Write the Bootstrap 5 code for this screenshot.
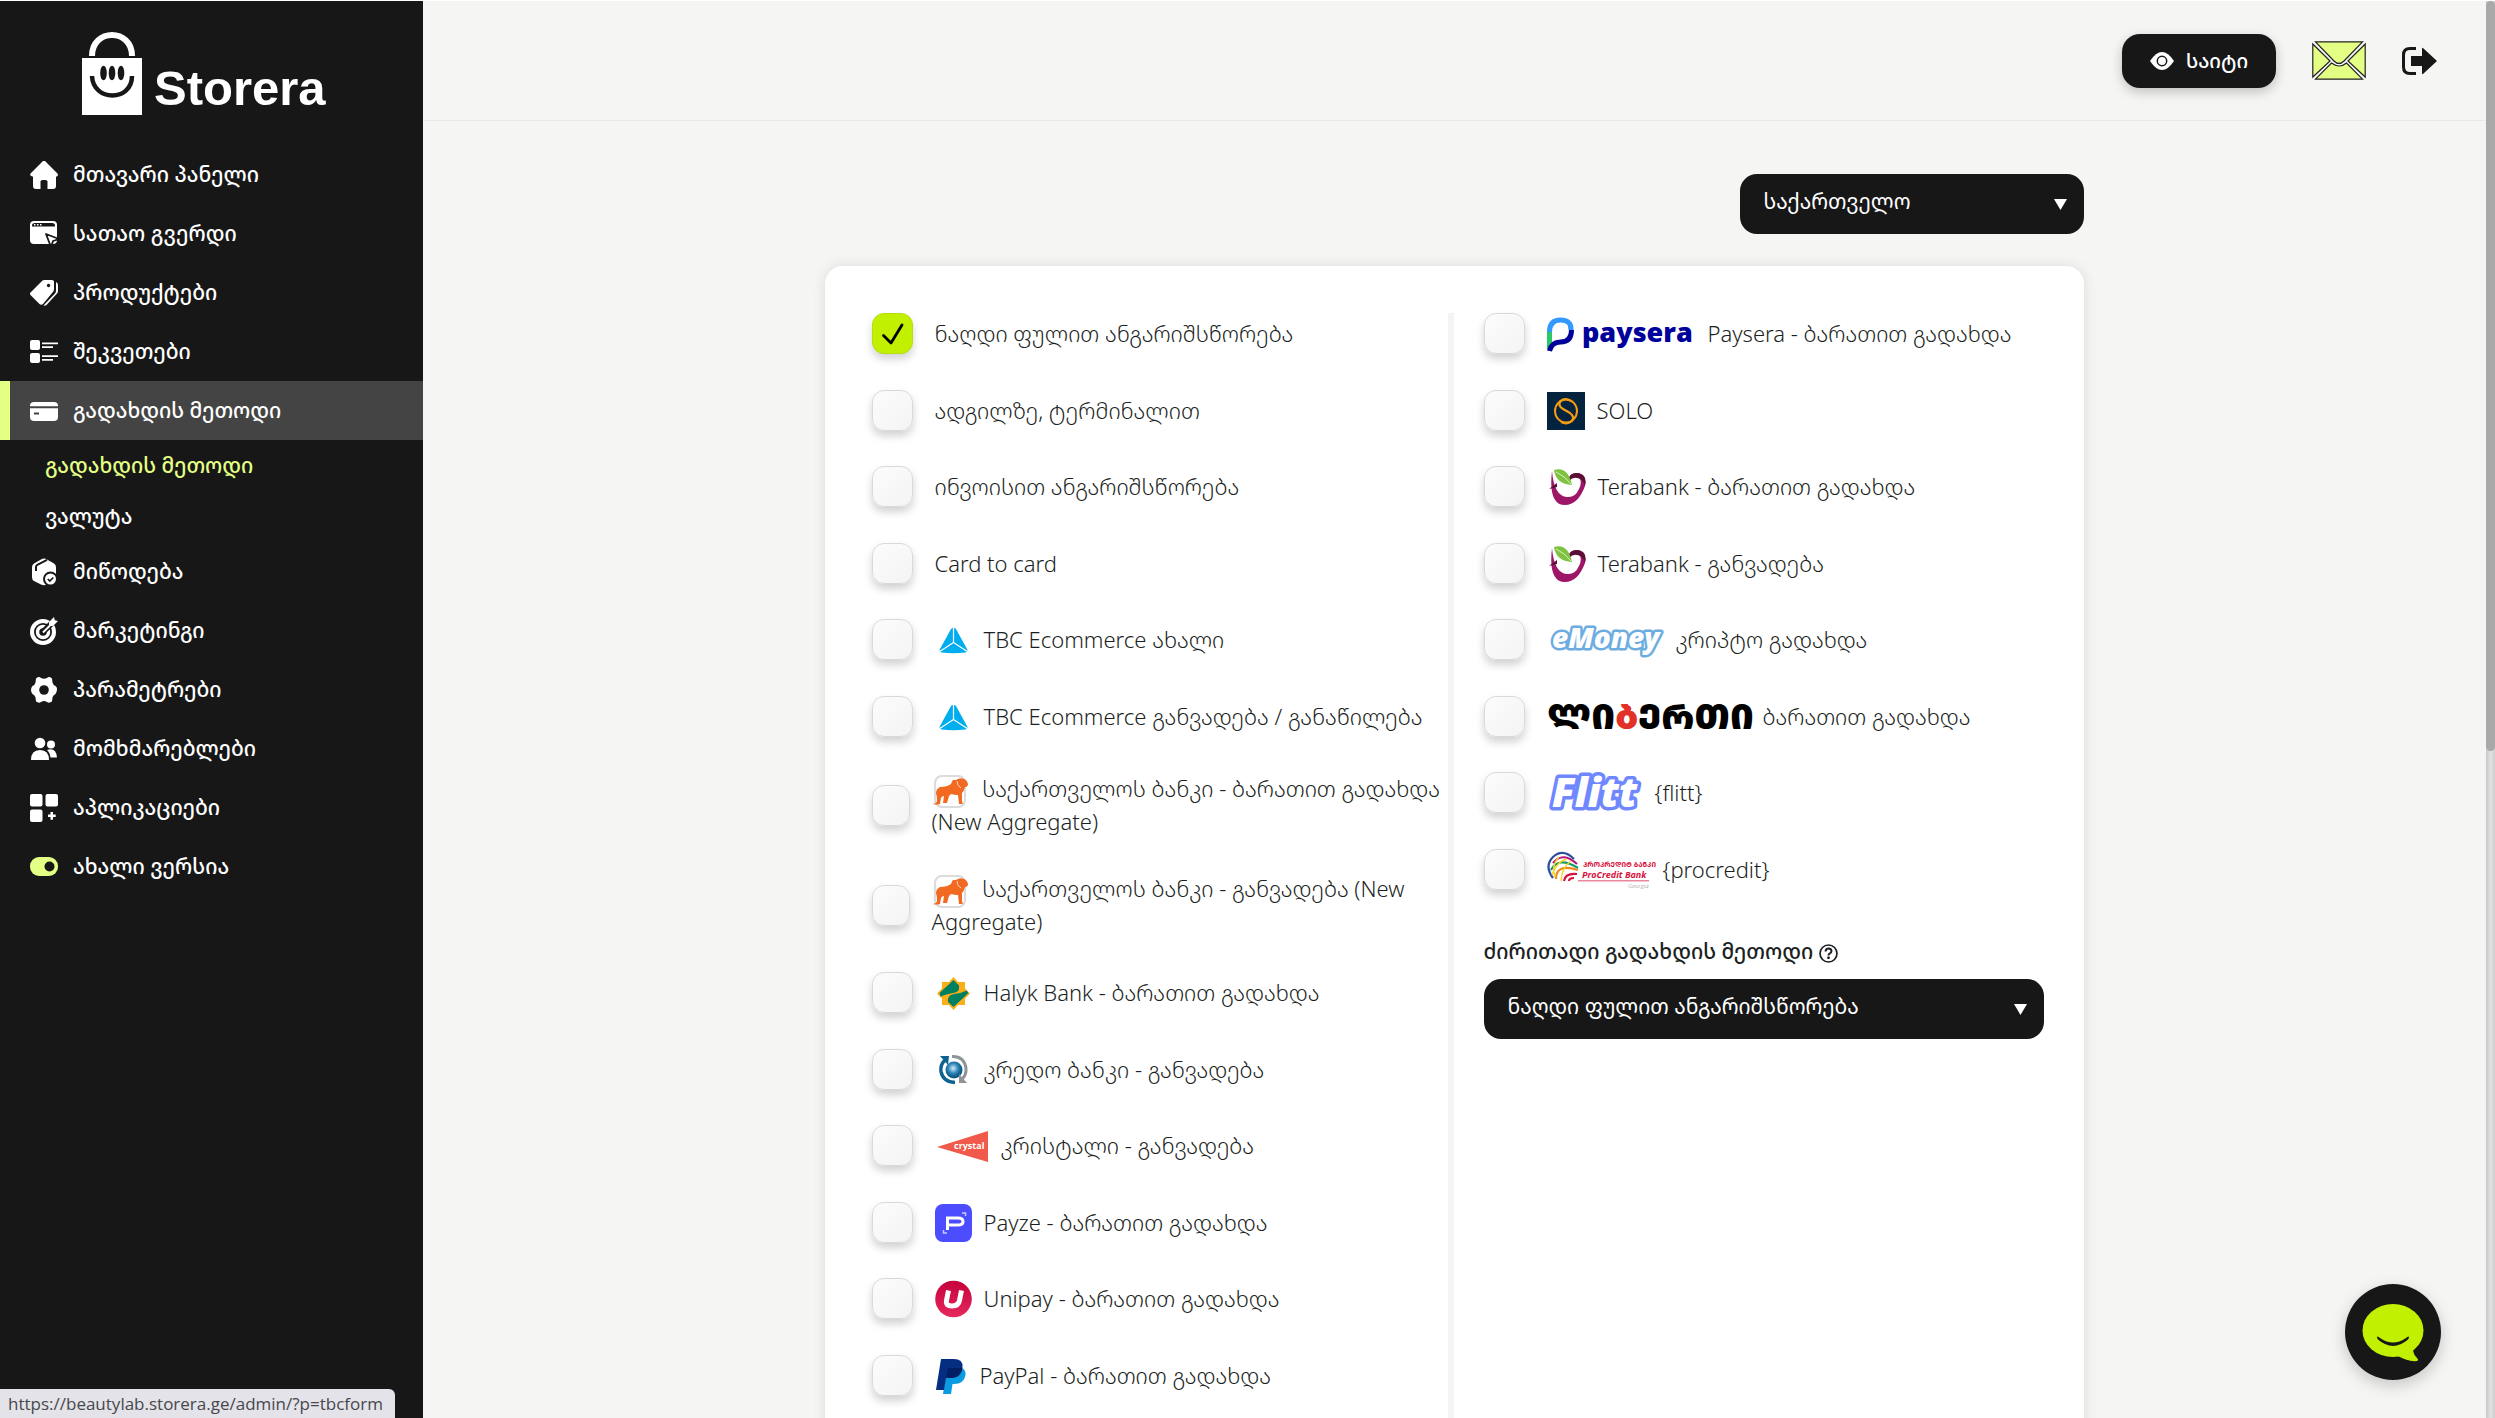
<!DOCTYPE html>
<html lang="ka">
<head>
<meta charset="utf-8">
<meta name="viewport" content="width=device-width, initial-scale=1">
<title>Storera</title>
<link href="https://cdn.jsdelivr.net/npm/bootstrap@5.3.0/dist/css/bootstrap.min.css" rel="stylesheet">
<script src="https://cdn.jsdelivr.net/npm/bootstrap@5.3.0/dist/js/bootstrap.bundle.min.js"></script>
<style>
:root{--ink:#171717;--lime:#e3ff84;--acid:#c1f100;--page:#f5f5f3}
body{font-family:"Noto Sans Georgian","Open Sans",sans-serif;font-size:22px;font-weight:300;color:#1c1f23;background:#fff;overflow:hidden}
.shell{padding-top:1px}
.side{width:423px;background:var(--ink)}
.brand-logo{padding:24px 0 0 78px;height:144px}
.side-link{height:59px;padding-left:30px;gap:15px;color:#fff;font-weight:500;font-size:21px;text-decoration:none}
.side-link svg{width:28px;height:28px;flex:none}
.side-link:hover{color:#fff}
.side-link.active{background:#444;border-left:10px solid var(--lime);padding-left:20px}
.side-sub{height:51px;padding-left:45px;color:#fff;font-weight:500;font-size:21px;text-decoration:none}
.side-sub.active{color:var(--lime)}
.main-area{background:var(--page);min-width:0}
.topbar{height:120px;border-bottom:1px solid #e9e9e8;padding-right:48px;gap:36px}
.site-btn{width:154px;height:54px;border:0;border-radius:18px;background:var(--ink);color:#fff;font-size:20px;font-weight:500;gap:12px;box-shadow:0 4px 12px rgba(0,0,0,.22)}
.plain-btn{border:0;background:none;padding:0;line-height:1}
.content-wrap{width:100%;max-width:1260px;padding:53px 1px 0 0}
.dark-select{height:60px;border:0;border-radius:17px;background-color:var(--ink);color:#fff;font-size:21px;font-weight:400;padding:0 44px 4px 24px;appearance:none;background-repeat:no-repeat;background-position:right 17px center;background-image:url("data:image/svg+xml,%3Csvg xmlns='http://www.w3.org/2000/svg' width='13' height='11'%3E%3Cpath d='M0 0h13L6.500 11z' fill='white'/%3E%3C/svg%3E")}
.country{width:344px}
.panel{background:#fff;border-radius:18px;box-shadow:0 0 14px rgba(0,0,0,.1);padding:47px 40px 0 47px}
.col-a{flex:0 0 582px;border-right:6px solid #f4f4f3}
.col-b{padding-left:30px}
.pay-item{min-height:41px;margin-bottom:36px}
.pay-item:nth-child(even){margin-bottom:35px}
.pay-item.pay-double{margin-bottom:34px}
.pay-check{appearance:none;flex:none;width:41px;height:41px;margin:0 22px 0 0;border:1px solid #d9d9d9;border-radius:12px;background:linear-gradient(135deg,#fcfcfc,#f4f4f4);box-shadow:0 5px 9px rgba(0,0,0,.18)}
.pay-check:checked{background:var(--acid) url("data:image/svg+xml,%3Csvg xmlns='http://www.w3.org/2000/svg' viewBox='0 0 39 39'%3E%3Cpath d='M10.500 21.500l7.500 7.500L29 11' fill='none' stroke='black' stroke-width='2.800' stroke-linecap='round' stroke-linejoin='round'/%3E%3C/svg%3E") center/100% 100%;border-color:#b4de0c}
.pay-label{line-height:38px;display:flex;align-items:center;gap:12px}
.pay-label svg{flex:none;overflow:visible}
.pay-double .pay-check{width:38px}
.pay-double .pay-label{display:block;line-height:33px}
.pay-double svg{margin:-6px 8px -6px 0;vertical-align:middle}
.default-label{font-size:21px;font-weight:500;line-height:30px;padding-top:11px;margin-bottom:13px}
.bar-rail{width:9px;background:linear-gradient(90deg,#c9c9c9,#e0e0e0 50%,#cfcfcf)}
.bar-thumb{height:750px;background:#a9a9a9;border-radius:5px}
.chat-btn{position:fixed;right:54px;bottom:38px;width:96px;height:96px;border:0;border-radius:50%;background:var(--ink);box-shadow:0 5px 16px rgba(0,0,0,.2);padding:0}
.url-tip{position:fixed;left:0;bottom:0;background:#e3e3e9;color:#47484d;font:400 17px/29px "Open Sans",sans-serif;padding:0 12px 0 8px;border-top-right-radius:6px}
</style>
</head>
<body>
<div class="shell d-flex vh-100">
<aside class="side flex-shrink-0">
  <div class="brand-logo">
    <svg width="260" height="96" viewBox="78 25 260 96" role="img" aria-label="Storera"><path d="M92 56c0-28 40-28 40 0" fill="none" stroke="#fff" stroke-width="6"/><path d="M82 58h60v57H82z" fill="#fff"/><g fill="#171717"><ellipse cx="103.500" cy="73" rx="3.300" ry="7.300"/><ellipse cx="112" cy="73" rx="3.300" ry="7.300"/><ellipse cx="121" cy="73" rx="3.300" ry="7.300"/></g><path d="M92 76c1 26 40 26 40 0" fill="none" stroke="#171717" stroke-width="4.500"/><text x="154" y="105" font-family="Liberation Sans,sans-serif" font-weight="700" font-size="49" fill="#fff">Storera</text></svg>
  </div>
  <nav>
    <a class="side-link d-flex align-items-center" href="#"><svg viewBox="0 0 28 28" fill="#fff"><path d="M14 0c1 0 1.500.4 2 .9L27 12c2 2 .5 3.500-1 3.700V25c0 2-1 3-3 3h-5.500v-8c0-1.500-7-1.500-7 0v8H6c-2 0-3-1-3-3v-9.300C1 15.500-1 14 1 12L12 .9c.5-.5 1-.9 2-.9z"/></svg>მთავარი პანელი</a>
    <a class="side-link d-flex align-items-center" href="#"><svg viewBox="0 0 28 28"><rect x="0" y="1" width="27" height="23" rx="4" fill="#fff"/><path d="M2 6.500V5.500Q2 3 5 3h17q3 0 3 2.500v1z" fill="#171717"/><path d="M4 4.800h1.500M7 4.800h1.500M10 4.800h1.500" stroke="#fff" stroke-width="1.400"/><path d="M16 14l13 5-6 2-2 6z" fill="#fff" stroke="#171717" stroke-width="1.800" stroke-linejoin="round"/></svg>სათაო გვერდი</a>
    <a class="side-link d-flex align-items-center" href="#"><svg viewBox="0 0 28 28" fill="#fff"><path fill-rule="evenodd" d="M12 2q1-1 2.500-1H22q2 0 2 2v7q0 2-1.500 3.500L13 25q-2 1.500-3.500 0L1 16.500q-2-2 0-3.500zM18.500 4.800a1.700 1.700 0 1 0 .1 0z"/><path d="M26 3q2 1 2 3v6q0 1.500-1 2.500L16.500 26q-1.500 1-3 .5L25 14.500q1-1.200 1-3z"/></svg>პროდუქტები</a>
    <a class="side-link d-flex align-items-center" href="#"><svg viewBox="0 0 28 28" fill="#fff"><rect x="0" y="2" width="10" height="10" rx="2"/><rect x="0" y="15" width="10" height="10" rx="2"/><path d="M12 4.500h16v1.800H12zM12 8.300h11v1.700H12zM12 17.200h16V19H12zM12 21h11v1.700H12z"/></svg>შეკვეთები</a>
    <a class="side-link active d-flex align-items-center" href="#" aria-current="page"><svg viewBox="0 0 28 28"><rect y="5" width="28" height="19" rx="4" fill="#fff"/><path d="M0 10.300h28M4 16.500h5" stroke="#444" stroke-width="2"/></svg>გადახდის მეთოდი</a>
    <a class="side-sub active d-flex align-items-center" href="#">გადახდის მეთოდი</a>
    <a class="side-sub d-flex align-items-center" href="#">ვალუტა</a>
    <a class="side-link d-flex align-items-center" href="#"><svg viewBox="0 0 28 28"><path d="M11 1.500q3-1.800 6 0l7 4q2 1 2 4V19q0 3-2 4l-7 3.500q-3 1.500-6 0l-7-3.500q-2-1-2-4V9.500q0-3 2-4z" fill="#fff"/><path d="M6 13V9q0-1.500 1.300-2.200L17 1.800" fill="none" stroke="#171717" stroke-width="2"/><circle cx="20.500" cy="21" r="6.500" fill="#fff" stroke="#171717" stroke-width="2"/><path d="M17.800 21l2 2 3.500-3.500" fill="none" stroke="#171717" stroke-width="1.700"/></svg>მიწოდება</a>
    <a class="side-link d-flex align-items-center" href="#"><svg viewBox="0 0 28 28"><circle cx="13" cy="15" r="11" fill="none" stroke="#fff" stroke-width="4"/><circle cx="13" cy="15" r="5.500" fill="none" stroke="#fff" stroke-width="3.500"/><path d="M12 16L23 5" stroke="#171717" stroke-width="6"/><path d="M13 15.500L22 6.500" stroke="#fff" stroke-width="2"/><path d="M19 5l5-5 .8 3.200L28 4l-5 5h-4z" fill="#fff"/></svg>მარკეტინგი</a>
    <a class="side-link d-flex align-items-center" href="#"><svg viewBox="0 0 28 28"><path d="M6 2.500Q9 0 11 2q3 1.500 6 0 2-2 5 .5l.5 4q.5 2.500 3 3.500 2 1.500 1.500 4t-1.500 4q-2.500 1-3 3.500l-.5 4q-3 2-5 .5-3-2-6 0-2 1.500-5-.5l-.5-4Q5 19 2.500 18 1 16.500 1 14t1.500-4q2.500-1 3-3.500z" fill="#fff"/><circle cx="14" cy="14" r="4.800" fill="#171717"/></svg>პარამეტრები</a>
    <a class="side-link d-flex align-items-center" href="#"><svg viewBox="0 0 28 28" fill="#fff"><circle cx="10" cy="8" r="5.300"/><circle cx="21" cy="9.500" r="4"/><path d="M1 25q0-10 9-10t9 10zM20.500 22.500q-.5-5-3.500-7.500 9-3 10 7.500z"/></svg>მომხმარებლები</a>
    <a class="side-link d-flex align-items-center" href="#"><svg viewBox="0 0 28 28" fill="#fff"><rect width="12.500" height="12.500" rx="2"/><rect x="15.500" width="12.500" height="12.500" rx="2"/><rect y="15.500" width="12.500" height="12.500" rx="2"/><path d="M20.500 18h2.500v2.500h2.700v2.500H23v2.700h-2.500V23H18v-2.500h2.500z"/></svg>აპლიკაციები</a>
    <a class="side-link d-flex align-items-center" href="#"><svg viewBox="0 0 28 28"><rect y="4" width="28" height="19" rx="9" fill="#e3ff84"/><circle cx="19.500" cy="13.500" r="5" fill="#171717"/></svg>ახალი ვერსია</a>
  </nav>
</aside>

<main class="main-area flex-grow-1 overflow-hidden">
  <header class="topbar d-flex align-items-center justify-content-end">
    <button class="site-btn d-flex align-items-center justify-content-center" type="button"><svg width="24" height="18" viewBox="0 0 24 18"><path d="M0 9Q12-9 24 9 12 27 0 9z" fill="#fff"/><circle cx="12" cy="9" r="4.700" fill="none" stroke="#171717" stroke-width="1.500"/></svg>საიტი</button>
    <button class="plain-btn" type="button" aria-label="messages"><svg width="54" height="39" viewBox="0 0 54 39" fill="#e3ff84" stroke="#222" stroke-width="1.200"><path d="M3.500.8h47L32 20q-5 5-10 0zM.8 3v33L18 20zM53.200 3v33L36 20zM3.500 38.200L19.500 22q8 6 15 0l16 16.200z"/></svg></button>
    <button class="plain-btn" type="button" aria-label="logout"><svg width="36" height="28" viewBox="0 0 36 28"><path d="M14 1.500H8Q1.500 1.500 1.500 8v12q0 6.500 6.500 6.500h6" fill="none" stroke="#171717" stroke-width="3"/><path d="M9 9h11V2q0-2 1.500-.5L35 14 21.500 26.500Q20 28 20 26v-7H9z" fill="#171717"/></svg></button>
  </header>

  <div class="content-wrap mx-auto">
    <div class="d-flex justify-content-end mb-4 pb-2">
      <select class="dark-select country" aria-label="ქვეყანა"><option>საქართველო</option></select>
    </div>
    <section class="panel d-flex vh-100">
      <ul class="col-a list-unstyled mb-0">
        <li class="pay-item d-flex align-items-center"><input class="pay-check" type="checkbox" id="p1" checked><label class="pay-label" for="p1">ნაღდი ფულით ანგარიშსწორება</label></li>
        <li class="pay-item d-flex align-items-center"><input class="pay-check" type="checkbox" id="p2"><label class="pay-label" for="p2">ადგილზე, ტერმინალით</label></li>
        <li class="pay-item d-flex align-items-center"><input class="pay-check" type="checkbox" id="p3"><label class="pay-label" for="p3">ინვოისით ანგარიშსწორება</label></li>
        <li class="pay-item d-flex align-items-center"><input class="pay-check" type="checkbox" id="p4"><label class="pay-label" for="p4">Card to card</label></li>
        <li class="pay-item d-flex align-items-center"><input class="pay-check" type="checkbox" id="p5"><label class="pay-label" for="p5"><svg width="37" height="38"><use href="#tbc"/></svg>TBC Ecommerce ახალი</label></li>
        <li class="pay-item d-flex align-items-center"><input class="pay-check" type="checkbox" id="p6"><label class="pay-label" for="p6"><svg width="37" height="38"><use href="#tbc"/></svg>TBC Ecommerce განვადება / განაწილება</label></li>
        <li class="pay-item pay-double d-flex align-items-center"><input class="pay-check" type="checkbox" id="p7"><label class="pay-label" for="p7"><svg width="37" height="33"><use href="#bog"/></svg> საქართველოს ბანკი - ბარათით გადახდა (New Aggregate)</label></li>
        <li class="pay-item pay-double d-flex align-items-center"><input class="pay-check" type="checkbox" id="p8"><label class="pay-label" for="p8"><svg width="37" height="33"><use href="#bog"/></svg> საქართველოს ბანკი - განვადება (New Aggregate)</label></li>
        <li class="pay-item d-flex align-items-center"><input class="pay-check" type="checkbox" id="p9"><label class="pay-label" for="p9"><svg width="37" height="38" viewBox="0 0 37 38"><path d="M18.500 3l4.500 5h7v6.500l5 5-5 5V31h-7l-4.500 5-4.500-5H7v-6.500l-5-5 5-5V8h7z" fill="#fbae17"/><path d="M18.500 6l5.500 5.500q1 7-6 7.500-7 1-12.500 3.500L4.500 19zM18.500 33L13 28q-1-7 6-8 7-.5 12.500-3.500l2 2.500z" fill="#00805f"/></svg>Halyk Bank - ბარათით გადახდა</label></li>
        <li class="pay-item d-flex align-items-center"><input class="pay-check" type="checkbox" id="p10"><label class="pay-label" for="p10"><svg width="37" height="38" viewBox="0 0 37 38"><defs><radialGradient id="globe" cx=".45" cy=".4"><stop offset="0" stop-color="#d5ecf8"/><stop offset=".6" stop-color="#2d84b5"/><stop offset="1" stop-color="#0a5b8b"/></radialGradient></defs><circle cx="19" cy="19" r="8.500" fill="url(#globe)"/><path d="M10 9q-5 5-4 11.500Q8 31 20 31.500" fill="none" stroke="#0e6292" stroke-width="3.500"/><path d="M5 5h9l-1 9z" fill="#0e6292"/><path d="M17 5.500Q29 5 31 17q.5 7-4 11" fill="none" stroke="#8e9497" stroke-width="3"/><path d="M24 23v9h8z" fill="#8e9497"/></svg>კრედო ბანკი - განვადება</label></li>
        <li class="pay-item d-flex align-items-center"><input class="pay-check" type="checkbox" id="p11"><label class="pay-label" for="p11"><svg width="54" height="38" viewBox="0 0 54 38"><path d="M2 20L53 4v31z" fill="#f15a4a"/><text x="19" y="22" font-family="Open Sans,sans-serif" font-weight="700" font-size="9" fill="#fff">crystal</text></svg>კრისტალი - განვადება</label></li>
        <li class="pay-item d-flex align-items-center"><input class="pay-check" type="checkbox" id="p12"><label class="pay-label" for="p12"><svg width="37" height="38" viewBox="0 0 37 38"><rect width="37" height="38" rx="8" fill="#4b4dff"/><path d="M12.500 26V14H23q5 0 5 3.500T23 21H12.500" fill="none" stroke="#fff" stroke-width="3"/><path d="M27 9h3.500v3M12 29H8.500v-3" fill="none" stroke="#c9caff" stroke-width="1.500"/></svg>Payze - ბარათით გადახდა</label></li>
        <li class="pay-item d-flex align-items-center"><input class="pay-check" type="checkbox" id="p13"><label class="pay-label" for="p13"><svg width="37" height="38" viewBox="0 0 37 38"><defs><linearGradient id="uni" x2="0" y2="1"><stop stop-color="#c5003a"/><stop offset="1" stop-color="#e6295f"/></linearGradient></defs><circle cx="18.500" cy="19" r="18.300" fill="url(#uni)"/><path d="M13.500 10.500l-2 10Q10.500 26 17 26t7.500-5.500l2-10" fill="none" stroke="#fff" stroke-width="5"/></svg>Unipay - ბარათით გადახდა</label></li>
        <li class="pay-item d-flex align-items-center"><input class="pay-check" type="checkbox" id="p14"><label class="pay-label" for="p14"><svg width="33" height="38" viewBox="0 0 33 38"><path d="M12 11h15q4 2 3.500 7Q29 27 19 27h-1.500L16 37H8z" fill="#0a9be0"/><path d="M6 2h13q9 0 8.500 8Q26.500 21 15 21h-4L9 33H1z" fill="#052e82"/><path d="M13 11h14.300Q26.300 21 15 21h-4z" fill="#021f66"/></svg>PayPal - ბარათით გადახდა</label></li>
      </ul>
      <div class="col-b flex-grow-1">
        <ul class="list-unstyled mb-0">
          <li class="pay-item d-flex align-items-center"><input class="pay-check" type="checkbox" id="q1"><label class="pay-label" for="q1"><svg width="149" height="38" viewBox="0 0 149 38"><path d="M2.500 17q0-12 11-12T24 15" fill="none" stroke="#3199ff" stroke-width="5"/><path d="M2.500 17v17" stroke="#2cc868" stroke-width="5"/><path d="M24.500 15q0 12-11 12-9 0-11 9" fill="none" stroke="#00009b" stroke-width="5"/><text x="35" y="27" font-family="Open Sans,sans-serif" font-weight="800" font-size="27" fill="#00009b">paysera</text></svg>Paysera - ბარათით გადახდა</label></li>
          <li class="pay-item d-flex align-items-center"><input class="pay-check" type="checkbox" id="q2"><label class="pay-label" for="q2"><svg width="38" height="38" viewBox="0 0 38 38"><path d="M0 0h38v38H0z" fill="#04233f"/><g fill="none" stroke="#f59c13"><ellipse cx="19" cy="19" rx="11" ry="11.500" stroke-width="2"/><path d="M24 9q-7-4-11 1-2 4 3 7l7 4q5 4 2 8-5 4-11 1" stroke-width="2.200"/></g></svg>SOLO</label></li>
          <li class="pay-item d-flex align-items-center"><input class="pay-check" type="checkbox" id="q3"><label class="pay-label" for="q3"><svg width="39" height="38"><use href="#tera"/></svg>Terabank - ბარათით გადახდა</label></li>
          <li class="pay-item d-flex align-items-center"><input class="pay-check" type="checkbox" id="q4"><label class="pay-label" for="q4"><svg width="39" height="38"><use href="#tera"/></svg>Terabank - განვადება</label></li>
          <li class="pay-item d-flex align-items-center"><input class="pay-check" type="checkbox" id="q5"><label class="pay-label" for="q5"><svg width="117" height="38" viewBox="0 0 117 38"><text x="5" y="27" font-family="Open Sans,sans-serif" font-style="italic" font-weight="800" font-size="28" fill="#fff" stroke="#6cacdf" stroke-width="5" stroke-linejoin="round" paint-order="stroke">eMoney</text></svg>კრიპტო გადახდა</label></li>
          <li class="pay-item d-flex align-items-center"><input class="pay-check" type="checkbox" id="q6"><label class="pay-label" for="q6"><svg width="204" height="38" viewBox="0 0 204 38"><text x="0" y="31" font-family="Noto Sans Georgian,DejaVu Sans,sans-serif" font-weight="900" font-size="36" fill="#000">ᲚᲘ<tspan fill="#e23127">Ბ</tspan>ᲔᲠᲗᲘ</text></svg>ბარათით გადახდა</label></li>
          <li class="pay-item d-flex align-items-center"><input class="pay-check" type="checkbox" id="q7"><label class="pay-label" for="q7"><svg width="96" height="38" viewBox="0 0 96 38"><text x="5" y="33" font-family="Open Sans,sans-serif" font-style="italic" font-weight="800" font-size="40" fill="#fff" stroke="#6f87ff" stroke-width="7" stroke-linejoin="round" paint-order="stroke">Flitt</text></svg>{flitt}</label></li>
          <li class="pay-item d-flex align-items-center"><input class="pay-check" type="checkbox" id="q8"><label class="pay-label" for="q8"><svg width="104" height="38" viewBox="0 0 104 38"><g fill="none" stroke-width="2.200"><path d="M6 27Q-3 15 6 6q10-9 21 2" stroke="#2d4f9e"/><path d="M6 12Q16 0 30 13" stroke="#b5127c"/><path d="M4 19Q11 5 31 17" stroke="#139a6b"/><path d="M9 28Q9 12 31 19" stroke="#f08a1d"/><path d="M5 24Q10 10 20 8M14 30q1-14 10-20M12 6Q4 14 8 26" stroke="#f5d327" stroke-width="1.500"/><path d="M17 30q1-8 13-7M22 30q0-3 5-3" stroke="#d8113c"/></g><g fill="#d8113c"><text x="36" y="16" font-family="Noto Sans Georgian,sans-serif" font-weight="700" font-size="7">ᲞᲠᲝᲙᲠᲔᲓᲘᲢ ᲑᲐᲜᲙᲘ</text><text x="35" y="27" font-family="Open Sans,sans-serif" font-weight="700" font-style="italic" font-size="9">ProCredit Bank</text><path d="M31 29.500h71v.8H31z"/></g><text x="81" y="37" font-family="Open Sans,sans-serif" font-style="italic" font-size="6" fill="#777">Georgia</text></svg>{procredit}</label></li>
        </ul>
        <label class="default-label d-block" for="defpay">ძირითადი გადახდის მეთოდი <svg width="19" height="19" viewBox="0 0 19 19"><circle cx="9.500" cy="9.500" r="8.500" fill="none" stroke="#1c1f23" stroke-width="1.700"/><path d="M6.500 7.500q.3-3 3-3t3 2.500q0 1.500-1.500 2.300-1.500.7-1.500 2.200" fill="none" stroke="#1c1f23" stroke-width="2"/><circle cx="9.500" cy="13.800" r="1.300"/></svg></label>
        <select class="dark-select w-100" id="defpay"><option>ნაღდი ფულით ანგარიშსწორება</option></select>
      </div>
    </section>
  </div>
</main>
<div class="bar-rail flex-shrink-0"><div class="bar-thumb"></div></div>
</div>

<button class="chat-btn" type="button" aria-label="chat"><svg width="96" height="96" viewBox="0 0 96 96"><ellipse cx="48" cy="46.500" rx="30.500" ry="26.500" fill="#c1f100"/><path d="M53 72q10 6 19 5 2-1 0-3-4-4-4-9z" fill="#c1f100"/><path d="M32 52.500q2 0 3 1.500 13 9 26 0 1-1.500 3-1.500 0 2-1 3-15 13-30 0-1-1-1-3z" fill="#171717"/></svg></button>
<div class="url-tip">https://beautylab.storera.ge/admin/?p=tbcform</div>

<svg width="0" height="0" class="position-absolute" aria-hidden="true">
  <symbol id="tbc" viewBox="0 0 37 38"><path d="M16 8q2.500-2.500 5 0L32 28q1.500 3-1.500 3.500-12 1.500-24 0Q3.500 31 5 28z" fill="#00aeef"/><path d="M18.500 6v16M18.500 21.500L4 31M18.500 21.500L33 31" stroke="#fff" stroke-width="1.200" fill="none"/></symbol>
  <symbol id="bog" viewBox="0 0 37 33"><rect x="3" y="1" width="30" height="31" rx="7" fill="#fff" stroke="#dcdcdc" stroke-width="2.200"/><path d="M24 5q4-3 8-1 3 1 4 5 0 3-3 3-1 4-3 6v8q0 1 1 3h-4l-1-9q-4 0-7-1l-2 2-2 7h-4l1-7q-2 0-3 2l-1 6q-3 1-7 0 4-1 4-3 0-5-1-8 0-4 4-6 7 0 11-3 1-3 2-4z" fill="#f26a21"/><path d="M25 6q0 5 4 7" fill="none" stroke="#fff" stroke-width=".7"/></symbol>
  <symbol id="tera" viewBox="0 0 39 38"><path d="M5 3q-4 34 13 34Q31 37 38 18q3-11-7-13-8 0-9 5 5-3 9-1 5 4 1 12-4 9-12 8Q7 28 5 3z" fill="#9e1668"/><path d="M22 10q1-5 9-5 9 2 7 12-3-7-8-7-4-1-8 3zM2 21l8-6v4z" fill="#5a0f35"/><path d="M7 2q14-4 18 15Q9 16 7 2z" fill="#7fc241"/><path d="M9 4q9 4 15 12" fill="none" stroke="#d8f0bb" stroke-width="1"/></symbol>
</svg>
</body>
</html>
